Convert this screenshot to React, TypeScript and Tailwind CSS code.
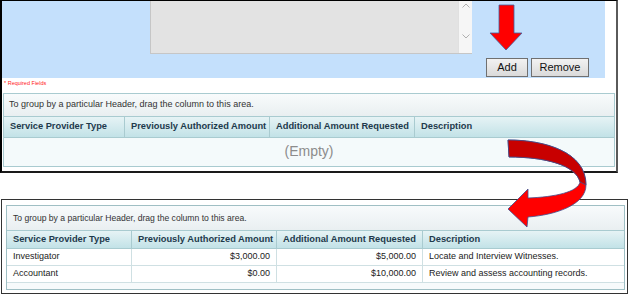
import React from "react";

const topCols = ["w-[121px]", "w-[145px]", "w-[145px]", "flex-1"];
const botCols = ["w-[125px]", "w-[145px]", "w-[146px]", "flex-1"];
const headers = [
  "Service Provider Type",
  "Previously Authorized Amount",
  "Additional Amount Requested",
  "Description",
];

const rows = [
  ["Investigator", "$3,000.00", "$5,000.00", "Locate and Interview Witnesses."],
  ["Accountant", "$0.00", "$10,000.00", "Review and assess accounting records."],
];

function HeaderRow({ cols, h }: { cols: string[]; h: string }) {
  return (
    <div className={`flex ${h} bg-gradient-to-b from-[#E6F3F5] to-[#C2E2E7] border-y border-[#A9CBD0]`}>
      {headers.map((t, i) => (
        <div
          key={t}
          className={`${cols[i]} flex items-center pl-[6px] text-[9.3px] font-bold text-[#1E3A4C] whitespace-nowrap ${i < 3 ? "border-r border-[#A9CBD0]" : ""}`}
        >
          {t}
        </div>
      ))}
    </div>
  );
}

export default function App() {
  return (
    <div className="relative w-[634px] h-[295px] bg-white overflow-hidden font-['Liberation_Sans',Arial,sans-serif]">
      {/* Top screenshot */}
      <div className="w-[618px] h-[173px] border-l-2 border-t border-b-2 border-r-2 border-l-black border-t-black border-b-[#1a1a1a] border-r-[#5a5a5a] flex flex-col">
        {/* blue form area */}
        <div className="w-[603px] h-[77px] bg-[#C4E0FC] flex items-end pl-[148px] pr-[16px] pb-[1px]">
          <div className="self-start w-[322px] h-[53px] bg-[#E3E3E3] border-l border-b border-[#C6C6C6] flex justify-end">
            <div className="w-[14px] h-full bg-[#F6F6F6] border-l border-[#E0E0E0] flex flex-col items-center pt-[2px]">
              <svg width="8" height="5" viewBox="0 0 8 5">
                <path d="M0.5 4.5 L4 1 L7.5 4.5" fill="none" stroke="#A8A8A8" strokeWidth="0.9" />
              </svg>
              <svg width="8" height="5" viewBox="0 0 8 5" className="mt-[26px]">
                <path d="M0.5 0.5 L4 4 L7.5 0.5" fill="none" stroke="#A8A8A8" strokeWidth="0.9" />
              </svg>
            </div>
          </div>
          <div className="ml-auto flex gap-[3px]">
            <div className="w-[42px] h-[19px] border border-[#707070] bg-gradient-to-b from-[#F2F2F2] to-[#DADADA] flex items-center justify-center text-[11px] text-[#111]">
              Add
            </div>
            <div className="w-[58px] h-[19px] border border-[#707070] bg-gradient-to-b from-[#F2F2F2] to-[#DADADA] flex items-center justify-center text-[11px] text-[#111]">
              Remove
            </div>
          </div>
        </div>
        <div className="h-[15px] pl-[2px] pt-[1px] text-[5.5px] leading-[8px] text-[#FF2020]">
          * Required Fields
        </div>
        {/* top grid */}
        <div className="ml-[1px] w-[612px] h-[74px] border border-[#A9CBD0] flex flex-col">
          <div className="h-[22px] bg-gradient-to-b from-[#F8FBFC] to-[#E9EFF1] flex items-center pl-[5px] text-[9px] text-[#333]">
            To group by a particular Header, drag the column to this area.
          </div>
          <HeaderRow cols={topCols} h="h-[22px]" />
          <div className="flex-1 bg-[#F4FAFB] flex items-center justify-center text-[14px] text-[#8C8C8C] pb-[2px]">
            (Empty)
          </div>
        </div>
      </div>

      {/* Bottom screenshot */}
      <div className="mt-[26px] ml-[1px] w-[627px] h-[95px] border-[1.5px] border-[#333] pl-[4px] pt-[5px] pr-[2px] pb-[3px]">
        <div className="w-full h-full border border-[#9FBFC4] flex flex-col">
          <div className="h-[24px] bg-gradient-to-b from-[#F8FBFC] to-[#E9EFF1] flex items-center pl-[6px] text-[8.6px] text-[#333]">
            To group by a particular Header, drag the column to this area.
          </div>
          <HeaderRow cols={botCols} h="h-[19px]" />
          {rows.map((r) => (
            <div key={r[0]} className="flex h-[17px] border-b border-[#CFE0E3] bg-white text-[9px] text-[#222]">
              <div className={`${botCols[0]} pl-[6px] flex items-center border-r border-[#CFE0E3]`}>{r[0]}</div>
              <div className={`${botCols[1]} pr-[6px] flex items-center justify-end border-r border-[#CFE0E3]`}>{r[1]}</div>
              <div className={`${botCols[2]} pr-[6px] flex items-center justify-end border-r border-[#CFE0E3]`}>{r[2]}</div>
              <div className={`${botCols[3]} pl-[6px] flex items-center whitespace-nowrap`}>{r[3]}</div>
            </div>
          ))}
          <div className="flex-1 bg-[#F7FAFB]" />
        </div>
      </div>

      {/* Arrow overlays */}
      <svg className="absolute inset-0 pointer-events-none" width="634" height="295" viewBox="0 0 634 295">
        <polygon
          points="499,5 514,5 514,33 522,33 506,50 490,33 499,33"
          fill="#FF0000"
          stroke="#3F5F9F"
          strokeWidth="0.8"
        />
        <path
          d="M508,140 C545,140 586,152 586,185 C586,205 555,215 528,217 L527,227 L508,209 L528,189 L528,198 C555,197 578,192 580,182 C576,165 545,157 509,157 Z"
          fill="#FF0000"
          stroke="#3F4F8F"
          strokeWidth="0.8"
        />
        <path
          d="M508,140 C545,140 586,152 586,185 L580,182 C576,165 545,157 509,157 Z"
          fill="#C80000"
          stroke="#3F4F8F"
          strokeWidth="0.8"
        />
      </svg>
    </div>
  );
}
